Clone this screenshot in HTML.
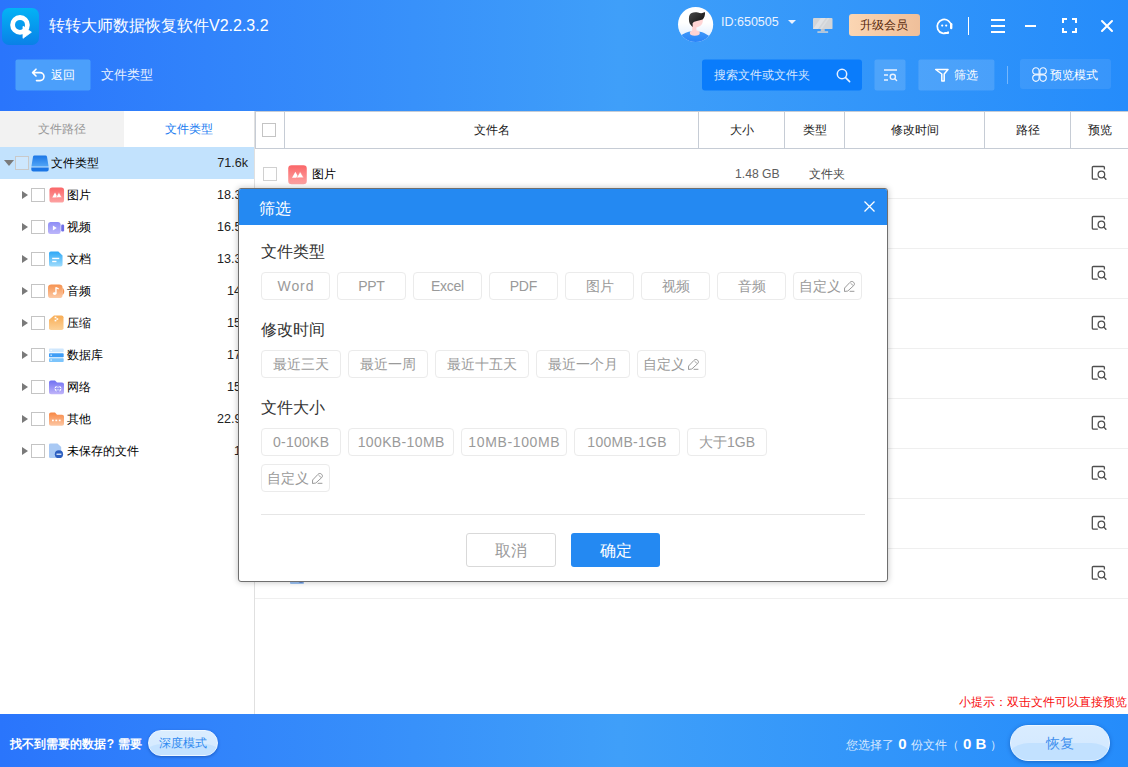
<!DOCTYPE html>
<html lang="zh">
<head>
<meta charset="utf-8">
<title>筛选</title>
<style>
*{box-sizing:border-box;margin:0;padding:0}
html,body{width:1128px;height:767px;overflow:hidden;background:#fff}
body{position:relative;font-family:"Liberation Sans",sans-serif;font-size:12px;color:#000}
.abs{position:absolute}
.t{position:absolute;white-space:nowrap;line-height:1}
svg{position:absolute;overflow:visible}
/* header */
#hdr{position:absolute;left:0;top:0;width:1128px;height:111px;background:linear-gradient(90deg,#2a75fc 0%,#3f9ff9 55%,#258cfb 100%)}
#logo{position:absolute;left:2px;top:8px;width:37px;height:37px;border-radius:7px;background:linear-gradient(180deg,#03b3f5 0%,#0a80e7 100%)}
.hbtn{position:absolute;top:59px;height:31px;border-radius:2px;background:rgba(255,255,255,.14);transform:translateY(.5px)}
/* left */
#left{position:absolute;left:0;top:111px;width:255px;height:603px;background:#fff;border-right:1px solid #e0e0e0}
.tab{position:absolute;top:0;height:36px;line-height:36px;text-align:center;font-size:12px}
.row{position:absolute;left:0;width:254px;height:32px}
.cb{position:absolute;width:14px;height:14px;border:1px solid #c4c4c4;background:#fff}
.tri{position:absolute;width:0;height:0;border-top:4px solid transparent;border-bottom:4px solid transparent;border-left:6px solid #7a7a7a}
.rt{position:absolute;left:67px;top:0;line-height:32px;font-size:12px;color:#000;white-space:nowrap}
.rc{position:absolute;right:6px;top:0;line-height:32px;font-size:12.6px;color:#222;white-space:nowrap}
/* table */
#th{position:absolute;left:255px;top:111px;width:873px;height:38px;background:#fff;border-top:1px solid #c6ccd5;border-bottom:1px solid #c6ccd5}
.col{position:absolute;top:0;height:36px;border-left:1px solid #c6ccd5;line-height:36px;text-align:center;font-size:12px;color:#1a1a1a}
.tr{position:absolute;left:255px;width:873px;height:51px;border-bottom:1px solid #efefef}
/* bottom */
#btm{position:absolute;left:0;top:714px;width:1128px;height:53px;background:linear-gradient(90deg,#2a75fc 0%,#3f9ff9 55%,#258cfb 100%)}
/* dialog */
#dlg{position:absolute;left:238px;top:188px;width:650px;height:394px;background:#fff;border:1px solid #6f6f6f;border-radius:3px;box-shadow:0 0 6px rgba(0,0,0,.25)}
#dlgt{position:absolute;left:0;top:0;width:648px;height:36px;background:#2489f2;border-radius:2px 2px 0 0}
.sec{position:absolute;left:22px;font-size:16px;color:#333;line-height:1;white-space:nowrap}
.chip{position:absolute;height:28px;border:1px solid #ebebeb;border-radius:4px;background:#fff;color:#9a9a9a;font-size:14px;line-height:27px;text-align:center;white-space:nowrap}
</style>
</head>
<body>
<div id="hdr">
  <div id="logo">
    <svg style="left:0;top:0" width="37" height="37" viewBox="0 0 37 37"><circle cx="18" cy="16.9" r="7.4" fill="none" stroke="#fff" stroke-width="4.8"/><path d="M21 18.3 L29.4 24.2 L21 30.3 Z" fill="#fff" stroke="#fff" stroke-width="0.8" stroke-linejoin="round"/></svg>
  </div>
  <div class="t" style="left:49px;top:18px;font-size:16px;color:#fff">转转大师数据恢复软件V2.2.3.2</div>
  <!-- back -->
  <div class="hbtn" style="left:16px;top:59px;height:31px;width:75px;background:#4b9ffb;transform:translate(-0.5px,0.5px)"></div>
  <svg style="left:31.4px;top:68px" width="15" height="14" viewBox="0 0 15 14"><path d="M5 1.2 L1.6 4.6 L5 8 M2 4.6 H9 A4 4 0 0 1 9 12.6 H5.5" fill="none" stroke="#fff" stroke-width="1.6" stroke-linecap="round" stroke-linejoin="round"/></svg>
  <div class="t" style="left:51px;top:69px;font-size:12px;color:#fff">返回</div>
  <div class="t" style="left:101px;top:68px;font-size:13px;color:#e9f1ff">文件类型</div>
  <!-- avatar -->
  <svg style="left:678px;top:6px" width="36" height="37" viewBox="0 0 36 37">
    <defs><clipPath id="avc"><circle cx="17.6" cy="18.5" r="17.6"/></clipPath><linearGradient id="avg" x1="0" y1="0" x2="0" y2="1"><stop offset="0.45" stop-color="#ffffff"/><stop offset="0.8" stop-color="#e6f1ff"/></linearGradient><linearGradient id="avb" x1="0" y1="0" x2="0" y2="1"><stop offset="0" stop-color="#3d97f9"/><stop offset="1" stop-color="#2680f8"/></linearGradient><linearGradient id="avh" x1="0" y1="0" x2="1" y2="1"><stop offset="0" stop-color="#4a4a4a"/><stop offset="0.7" stop-color="#1c1c1c"/></linearGradient></defs>
    <circle cx="17.6" cy="18.5" r="17.6" fill="url(#avg)"/>
    <g clip-path="url(#avc)">
      <path d="M-1 33 C4 28 8 26.2 12.1 25.5 L21.8 25.7 C26 26.4 30 28.6 36 34 V38 H-1 Z" fill="url(#avb)"/>
      <path d="M14.2 19 H18.4 V25.5 H14.2 Z" fill="#ffd3d3"/>
      <ellipse cx="16.8" cy="27" rx="5" ry="2.7" fill="#ffd3d3"/>
      <path d="M14.4 15 L24.9 13.6 C24.9 16 24.4 17.6 23.6 18.6 C22.6 20 21 21 18 21.5 L14.4 21 Z" fill="#ffd5d5"/>
      <path d="M10.9 13 C10.8 9.5 12 7.6 13.6 6.9 C15.4 6.1 18 6 20 6.6 C22.4 7.4 24.6 7.6 26.8 6.1 C27.2 7.8 27 9.2 26.5 10.4 C26 11.8 25.3 12.8 24.6 13.5 C22.4 14.1 19.4 14.6 17.1 15.6 C16 16 15 16.6 14.6 17.3 L14.7 21 C13.6 20 12.3 18.6 11.6 17.2 C11.1 16 10.9 14.6 10.9 13 Z" fill="url(#avh)"/>
    </g>
  </svg>
  <div class="t" style="left:721px;top:16px;font-size:12.5px;color:#eaf2ff">ID:650505</div>
  <div class="abs" style="left:788px;top:20px;width:0;height:0;border-left:4px solid transparent;border-right:4px solid transparent;border-top:4px solid #eaf2ff"></div>
  <!-- monitor -->
  <svg style="left:813px;top:18px" width="19.5" height="15" preserveAspectRatio="none" viewBox="0 0 20 16"><rect x="0" y="0" width="20" height="11.8" rx="1" fill="#d3d5d8"/><path d="M8 0 L13 0 L5 11.8 L0 11.8 Z" fill="#e0e2e5"/><path d="M15 0 L17 0 L9 11.8 L7 11.8 Z" fill="#dcdee1"/><rect x="8" y="11.8" width="4" height="2.4" fill="#c3c6cb"/><rect x="4.5" y="14.2" width="11" height="1.6" fill="#d0d2d6"/></svg>
  <!-- vip -->
  <div class="abs" style="left:849px;top:14px;width:71px;height:22px;border-radius:3px;background:linear-gradient(90deg,#fbd6b3,#efbf9a);color:#55260a;font-size:12px;line-height:22px;text-align:center;text-indent:-2px">升级会员</div>
  <!-- service -->
  <svg style="left:935px;top:17px" width="19" height="18" viewBox="0 0 19 18"><path d="M13.2 15.2 A7 7 0 1 1 16.2 9.2" fill="none" stroke="#fff" stroke-width="1.7" stroke-linecap="round"/><path d="M16.2 7.2 V11" stroke="#fff" stroke-width="2.4" stroke-linecap="round"/><circle cx="7.2" cy="8.6" r="1.1" fill="#fff"/><circle cx="11.2" cy="8.6" r="1.1" fill="#fff"/><path d="M10 16 H13" stroke="#fff" stroke-width="2" stroke-linecap="round"/></svg>
  <div class="abs" style="left:968px;top:17px;width:1px;height:18px;background:#fff"></div>
  <!-- menu -->
  <div class="abs" style="left:991px;top:19px;width:14px;height:2px;background:#fff"></div>
  <div class="abs" style="left:991px;top:25px;width:14px;height:2px;background:#fff"></div>
  <div class="abs" style="left:991px;top:31px;width:14px;height:2px;background:#fff"></div>
  <div class="abs" style="left:1025px;top:25px;width:11px;height:2px;background:#fff"></div>
  <svg style="left:1062px;top:18px" width="15" height="15" viewBox="0 0 15 15"><path d="M1 5 V1 H5 M10 1 H14 V5 M14 10 V14 H10 M5 14 H1 V10" fill="none" stroke="#fff" stroke-width="2"/></svg>
  <svg style="left:1101px;top:20px" width="12" height="12" viewBox="0 0 12 12"><path d="M1 1 L11 11 M11 1 L1 11" stroke="#fff" stroke-width="2" stroke-linecap="round"/></svg>
  <!-- search -->
  <div class="abs" style="left:702px;top:59px;width:160px;height:31px;border-radius:3px;background:#0a7cfb;transform:translateY(.5px)"></div>
  <div class="t" style="left:714px;top:69px;font-size:12px;color:#d5e6ff">搜索文件或文件夹</div>
  <svg style="left:836px;top:68px" width="15" height="15" viewBox="0 0 15 15"><circle cx="6" cy="6" r="4.7" fill="none" stroke="#e6f0ff" stroke-width="1.5"/><path d="M9.6 9.6 L13.6 13.6" stroke="#e6f0ff" stroke-width="1.6" stroke-linecap="round"/></svg>
  <div class="hbtn" style="left:875px;width:31px;transform:translate(-.5px,.5px)"></div>
  <svg style="left:883px;top:68px" width="16" height="14" viewBox="0 0 16 14"><path d="M1 2 H14 M1 7 H5 M1 12 H5" stroke="#eaf2ff" stroke-width="1.5"/><circle cx="9.8" cy="8.8" r="2.6" fill="none" stroke="#eaf2ff" stroke-width="1.4"/><path d="M11.8 10.8 L13.6 12.6" stroke="#eaf2ff" stroke-width="1.4" stroke-linecap="round"/></svg>
  <div class="hbtn" style="left:918px;width:76px;transform:translate(.4px,.5px)"></div>
  <svg style="left:934px;top:68px" width="16" height="15" viewBox="0 0 16 15"><path d="M1.7 1.5 H14 L10.2 6 V13 H7.8 V6 Z" fill="none" stroke="#fff" stroke-width="1.5" stroke-linejoin="round"/></svg>
  <div class="t" style="left:954px;top:69px;font-size:12px;color:#fff">筛选</div>
  <div class="abs" style="left:1007px;top:66px;width:1px;height:18px;background:rgba(255,255,255,.35)"></div>
  <div class="hbtn" style="left:1020px;width:91px;top:59px;height:30px;transform:none;border-radius:3px;background:rgba(255,255,255,.085)"></div>
  <svg style="left:1032px;top:67px" width="15" height="15" viewBox="0 0 15 15"><g fill="none" stroke="#f2f7ff" stroke-width="1.15"><path d="M3.9 0.7 A3.2 3.2 0 0 0 0.7 3.9 A3.2 3.2 0 0 0 3.9 7.1 H7.1 V3.9 A3.2 3.2 0 0 0 3.9 0.7 Z"/><path d="M3.9 0.7 A3.2 3.2 0 0 0 0.7 3.9 A3.2 3.2 0 0 0 3.9 7.1 H7.1 V3.9 A3.2 3.2 0 0 0 3.9 0.7 Z" transform="translate(15,0) scale(-1,1)"/><path d="M3.9 0.7 A3.2 3.2 0 0 0 0.7 3.9 A3.2 3.2 0 0 0 3.9 7.1 H7.1 V3.9 A3.2 3.2 0 0 0 3.9 0.7 Z" transform="translate(0,15) scale(1,-1)"/><path d="M3.9 0.7 A3.2 3.2 0 0 0 0.7 3.9 A3.2 3.2 0 0 0 3.9 7.1 H7.1 V3.9 A3.2 3.2 0 0 0 3.9 0.7 Z" transform="translate(15,15) scale(-1,-1)"/></g></svg>
  <div class="t" style="left:1050px;top:69px;font-size:12px;color:#fff">预览模式</div>
</div>
<div id="left">
  <div class="tab" style="left:0;width:124px;background:#f2f2f2;color:#999">文件路径</div>
  <div class="tab" style="left:124px;width:130px;background:#fff;color:#1c7df0">文件类型</div>
  <div class="row" style="top:36px;background:#c2e2fd">
    <div class="abs" style="left:4px;top:13px;width:0;height:0;border-left:5px solid transparent;border-right:5px solid transparent;border-top:6px solid #7a7a7a"></div>
    <div class="cb" style="left:15px;top:9px;background:#cde7fe;border-color:#c9c9c9"></div>
    <svg style="left:31px;top:8px" width="18" height="17" viewBox="0 0 18 17"><defs><linearGradient id="gdr" x1="0" y1="0" x2="0" y2="1"><stop offset="0" stop-color="#1b76e6"/><stop offset="1" stop-color="#52a6f7"/></linearGradient></defs><path d="M3.6 0.5 H14.4 A1.6 1.6 0 0 1 16 1.8 L17.6 11.5 H0.4 L2 1.8 A1.6 1.6 0 0 1 3.6 0.5 Z" fill="url(#gdr)"/><path d="M0.3 12.6 H17.7 V14.4 A2 2 0 0 1 15.7 16.4 H2.3 A2 2 0 0 1 0.3 14.4 Z" fill="#1b76e6"/></svg>
    <div class="rt" style="left:51px">文件类型</div>
    <div class="rc">71.6k</div>
  </div>
  <div class="row" style="top:68px"><div class="tri" style="left:21.5px;top:12px"></div><div class="cb" style="left:31px;top:9px"></div><svg style="left:48.5px;top:8px" width="15.5" height="16" preserveAspectRatio="none" viewBox="0 0 17 18"><defs><linearGradient id="gi" x1="0" y1="0" x2="0" y2="1"><stop offset="0" stop-color="#fa6668"/><stop offset="1" stop-color="#fda3a3"/></linearGradient></defs><rect x="0.5" y="0.5" width="16" height="17" rx="3" fill="url(#gi)"/><path d="M3.6 11.8 L6.6 6.2 L9.6 11.8 Z" fill="#fff"/><path d="M7.7 11.8 L10.9 6.2 L14.1 11.8 Z" fill="#fff" stroke="#fb8485" stroke-width="0.5"/></svg><div class="rt">图片</div><div class="rc" style="right:auto;left:216.9px">18.3k</div></div>
  <div class="row" style="top:100px"><div class="tri" style="left:21.5px;top:12px"></div><div class="cb" style="left:31px;top:9px"></div><svg style="left:48px;top:8.5px" width="16.5" height="16" preserveAspectRatio="none" viewBox="0 0 17 16"><defs><linearGradient id="gv" x1="0" y1="0" x2="0" y2="1"><stop offset="0" stop-color="#8d8df6"/><stop offset="1" stop-color="#bdb6fa"/></linearGradient></defs><rect x="0" y="2" width="13" height="12" rx="2.5" fill="url(#gv)"/><rect x="13.6" y="4.6" width="3" height="6.8" rx="1.2" fill="#6f6fe6"/><path d="M5 5.4 L9 8 L5 10.6 Z" fill="#fff"/></svg><div class="rt">视频</div><div class="rc" style="right:auto;left:216.9px">16.5k</div></div>
  <div class="row" style="top:132px"><div class="tri" style="left:21.5px;top:12px"></div><div class="cb" style="left:31px;top:9px"></div><svg style="left:49px;top:8px" width="14" height="16" preserveAspectRatio="none" viewBox="0 0 15 18"><defs><linearGradient id="gd" x1="0" y1="0" x2="0" y2="1"><stop offset="0" stop-color="#2fa8f6"/><stop offset="1" stop-color="#9fdcfc"/></linearGradient></defs><path d="M2 0.5 H10 L14.5 5 V15.5 A2 2 0 0 1 12.5 17.5 H2 A2 2 0 0 1 0 15.5 V2.5 A2 2 0 0 1 2 0.5 Z" fill="url(#gd)"/><rect x="3.4" y="7.6" width="7.6" height="1.6" fill="#fff"/><rect x="3.4" y="11" width="4.6" height="1.6" fill="#fff"/></svg><div class="rt">文档</div><div class="rc" style="right:auto;left:216.9px">13.3k</div></div>
  <div class="row" style="top:164px"><div class="tri" style="left:21.5px;top:12px"></div><div class="cb" style="left:31px;top:9px"></div><svg style="left:48px;top:8.5px" width="16.5" height="14.5" preserveAspectRatio="none" viewBox="0 0 17 16"><defs><linearGradient id="ga" x1="0" y1="0" x2="0" y2="1"><stop offset="0" stop-color="#f6924f"/><stop offset="1" stop-color="#fccaa6"/></linearGradient></defs><rect x="0" y="0.5" width="15" height="15" rx="3.5" fill="url(#ga)"/><path d="M15 4 C17.3 6 17.3 10 15 12 Z" fill="#f6924f"/><path d="M8.2 3.6 V10.2 M8.2 3.8 L11 5.6" stroke="#fff" stroke-width="1.4" fill="none"/><ellipse cx="6.9" cy="10.6" rx="1.9" ry="1.5" fill="#fff"/></svg><div class="rt">音频</div><div class="rc" style="right:auto;left:226.9px">14</div></div>
  <div class="row" style="top:196px"><div class="tri" style="left:21.5px;top:12px"></div><div class="cb" style="left:31px;top:9px"></div><svg style="left:48.5px;top:8px" width="15" height="15.5" preserveAspectRatio="none" viewBox="0 0 15 18"><defs><linearGradient id="gz" x1="0" y1="0" x2="0" y2="1"><stop offset="0" stop-color="#f8ad55"/><stop offset="1" stop-color="#fcd299"/></linearGradient></defs><path d="M5 0.5 H12.5 A2 2 0 0 1 14.5 2.5 V15.5 A2 2 0 0 1 12.5 17.5 H2 A2 2 0 0 1 0 15.5 V5.5 Z" fill="url(#gz)"/><rect x="5.6" y="2" width="1.8" height="1.8" fill="#fff"/><rect x="7.4" y="3.8" width="1.8" height="1.8" fill="#fff"/><rect x="5.6" y="5.6" width="1.8" height="1.8" fill="#fff"/></svg><div class="rt">压缩</div><div class="rc" style="right:auto;left:226.9px">15</div></div>
  <div class="row" style="top:228px"><div class="tri" style="left:21.5px;top:12px"></div><div class="cb" style="left:31px;top:9px"></div><svg style="left:49px;top:9px" width="14.7" height="14.5" preserveAspectRatio="none" viewBox="0 0 15 16"><rect x="0" y="0.5" width="15" height="4.2" rx="0.8" fill="#cfe7fd"/><rect x="0" y="5.7" width="15" height="4.4" rx="0.8" fill="#3f9df6"/><rect x="0" y="11.2" width="15" height="4.2" rx="0.8" fill="#7cc4fb"/><rect x="1.5" y="2" width="1.4" height="1.2" fill="#fff"/><rect x="1.5" y="7.3" width="1.4" height="1.2" fill="#fff"/><rect x="1.5" y="12.7" width="1.4" height="1.2" fill="#fff"/></svg><div class="rt">数据库</div><div class="rc" style="right:auto;left:226.9px">17</div></div>
  <div class="row" style="top:260px"><div class="tri" style="left:21.5px;top:12px"></div><div class="cb" style="left:31px;top:9px"></div><svg style="left:49px;top:9.4px" width="15" height="14.6" preserveAspectRatio="none" viewBox="0 0 15 17"><defs><linearGradient id="gn" x1="0" y1="0" x2="0" y2="1"><stop offset="0" stop-color="#6f70f2"/><stop offset="1" stop-color="#c0b4f9"/></linearGradient></defs><path d="M2 0.5 H6 L8 3 H13 A2 2 0 0 1 15 5 V14.5 A2 2 0 0 1 13 16.5 H2 A2 2 0 0 1 0 14.5 V2.5 A2 2 0 0 1 2 0.5 Z" fill="url(#gn)"/><circle cx="9" cy="10" r="3.4" fill="#fff"/><path d="M9 6.6 V13.4 M5.6 10 H12.4" stroke="#8a86f3" stroke-width="0.9"/><ellipse cx="9" cy="10" rx="1.5" ry="3.4" fill="none" stroke="#8a86f3" stroke-width="0.8"/></svg><div class="rt">网络</div><div class="rc" style="right:auto;left:226.9px">15</div></div>
  <div class="row" style="top:292px"><div class="tri" style="left:21.5px;top:12px"></div><div class="cb" style="left:31px;top:9px"></div><svg style="left:49px;top:9.3px" width="15" height="14.2" preserveAspectRatio="none" viewBox="0 0 15 16"><defs><linearGradient id="go" x1="0" y1="0" x2="0" y2="1"><stop offset="0" stop-color="#f88744"/><stop offset="1" stop-color="#fcc7a4"/></linearGradient></defs><path d="M2 0.5 H6 L8 3 H13 A2 2 0 0 1 15 5 V13.5 A2 2 0 0 1 13 15.5 H2 A2 2 0 0 1 0 13.5 V2.5 A2 2 0 0 1 2 0.5 Z" fill="url(#go)"/><rect x="3" y="8.6" width="1.8" height="1.8" fill="#fff"/><rect x="6.4" y="8.6" width="1.8" height="1.8" fill="#fff"/><rect x="9.8" y="8.6" width="1.8" height="1.8" fill="#fff"/></svg><div class="rt">其他</div><div class="rc" style="right:auto;left:216.9px">22.9k</div></div>
  <div class="row" style="top:324px"><div class="tri" style="left:21.5px;top:12px"></div><div class="cb" style="left:31px;top:9px"></div><svg style="left:49px;top:8.3px" width="15" height="16" preserveAspectRatio="none" viewBox="0 0 16 18"><path d="M1.5 0.5 H9 L13 4.5 V15.5 A1.5 1.5 0 0 1 11.5 17 H1.5 A1.5 1.5 0 0 1 0 15.5 V2 A1.5 1.5 0 0 1 1.5 0.5 Z" fill="#a9c9f4"/><circle cx="10.6" cy="12.6" r="4.4" fill="#2d5fc0"/><rect x="8" y="11.9" width="5.2" height="1.5" fill="#dbe8fb"/></svg><div class="rt">未保存的文件</div><div class="rc" style="right:auto;left:233.9px">1</div></div>
</div>
<div id="th">
  <div class="col" style="left:0;width:29px"><div class="cb" style="left:6px;top:11px"></div></div>
  <div class="col" style="left:29px;width:414px">文件名</div>
  <div class="col" style="left:443px;width:86px">大小</div>
  <div class="col" style="left:529px;width:60px">类型</div>
  <div class="col" style="left:589px;width:140px">修改时间</div>
  <div class="col" style="left:729px;width:86px">路径</div>
  <div class="col" style="left:815px;width:58px">预览</div>
</div>
<div id="rows">
  <div class="tr" style="top:148px"><svg style="left:836px;top:17px" width="17" height="17" viewBox="0 0 17 17"><path d="M13.4 4.6 V2.6 A1.1 1.1 0 0 0 12.3 1.5 H2.4 A1.1 1.1 0 0 0 1.3 2.6 V13 A1.1 1.1 0 0 0 2.4 14.1 H6.8" fill="none" stroke="#4f4f4f" stroke-width="1.3"/><circle cx="10.4" cy="9.5" r="3.3" fill="none" stroke="#4f4f4f" stroke-width="1.3"/><path d="M12.9 12.1 L14.9 14.3" stroke="#4f4f4f" stroke-width="1.4" stroke-linecap="round"/></svg><div class="cb" style="left:8px;top:19px;border-color:#d0d0d0"></div><svg style="left:33px;top:16.5px" width="19" height="19.5" preserveAspectRatio="none" viewBox="0 0 17 18"><rect x="0.2" y="0.2" width="16.6" height="17.6" rx="3" fill="url(#gi)"/><path d="M3.6 11.8 L6.6 6.2 L9.6 11.8 Z" fill="#fff"/><path d="M7.7 11.8 L10.9 6.2 L14.1 11.8 Z" fill="#fff" stroke="#fb8485" stroke-width="0.5"/></svg><div class="t" style="left:57px;top:20px;font-size:12px;color:#000">图片</div><div class="t" style="left:480px;top:20px;font-size:12.2px;color:#5e5e5e">1.48 GB</div><div class="t" style="left:554px;top:20px;font-size:12px;color:#4a4a4a">文件夹</div></div>
  <div class="tr" style="top:198px"><svg style="left:836px;top:17px" width="17" height="17" viewBox="0 0 17 17"><path d="M13.4 4.6 V2.6 A1.1 1.1 0 0 0 12.3 1.5 H2.4 A1.1 1.1 0 0 0 1.3 2.6 V13 A1.1 1.1 0 0 0 2.4 14.1 H6.8" fill="none" stroke="#4f4f4f" stroke-width="1.3"/><circle cx="10.4" cy="9.5" r="3.3" fill="none" stroke="#4f4f4f" stroke-width="1.3"/><path d="M12.9 12.1 L14.9 14.3" stroke="#4f4f4f" stroke-width="1.4" stroke-linecap="round"/></svg></div>
  <div class="tr" style="top:248px"><svg style="left:836px;top:17px" width="17" height="17" viewBox="0 0 17 17"><path d="M13.4 4.6 V2.6 A1.1 1.1 0 0 0 12.3 1.5 H2.4 A1.1 1.1 0 0 0 1.3 2.6 V13 A1.1 1.1 0 0 0 2.4 14.1 H6.8" fill="none" stroke="#4f4f4f" stroke-width="1.3"/><circle cx="10.4" cy="9.5" r="3.3" fill="none" stroke="#4f4f4f" stroke-width="1.3"/><path d="M12.9 12.1 L14.9 14.3" stroke="#4f4f4f" stroke-width="1.4" stroke-linecap="round"/></svg></div>
  <div class="tr" style="top:298px"><svg style="left:836px;top:17px" width="17" height="17" viewBox="0 0 17 17"><path d="M13.4 4.6 V2.6 A1.1 1.1 0 0 0 12.3 1.5 H2.4 A1.1 1.1 0 0 0 1.3 2.6 V13 A1.1 1.1 0 0 0 2.4 14.1 H6.8" fill="none" stroke="#4f4f4f" stroke-width="1.3"/><circle cx="10.4" cy="9.5" r="3.3" fill="none" stroke="#4f4f4f" stroke-width="1.3"/><path d="M12.9 12.1 L14.9 14.3" stroke="#4f4f4f" stroke-width="1.4" stroke-linecap="round"/></svg></div>
  <div class="tr" style="top:348px"><svg style="left:836px;top:17px" width="17" height="17" viewBox="0 0 17 17"><path d="M13.4 4.6 V2.6 A1.1 1.1 0 0 0 12.3 1.5 H2.4 A1.1 1.1 0 0 0 1.3 2.6 V13 A1.1 1.1 0 0 0 2.4 14.1 H6.8" fill="none" stroke="#4f4f4f" stroke-width="1.3"/><circle cx="10.4" cy="9.5" r="3.3" fill="none" stroke="#4f4f4f" stroke-width="1.3"/><path d="M12.9 12.1 L14.9 14.3" stroke="#4f4f4f" stroke-width="1.4" stroke-linecap="round"/></svg></div>
  <div class="tr" style="top:398px"><svg style="left:836px;top:17px" width="17" height="17" viewBox="0 0 17 17"><path d="M13.4 4.6 V2.6 A1.1 1.1 0 0 0 12.3 1.5 H2.4 A1.1 1.1 0 0 0 1.3 2.6 V13 A1.1 1.1 0 0 0 2.4 14.1 H6.8" fill="none" stroke="#4f4f4f" stroke-width="1.3"/><circle cx="10.4" cy="9.5" r="3.3" fill="none" stroke="#4f4f4f" stroke-width="1.3"/><path d="M12.9 12.1 L14.9 14.3" stroke="#4f4f4f" stroke-width="1.4" stroke-linecap="round"/></svg></div>
  <div class="tr" style="top:448px"><svg style="left:836px;top:17px" width="17" height="17" viewBox="0 0 17 17"><path d="M13.4 4.6 V2.6 A1.1 1.1 0 0 0 12.3 1.5 H2.4 A1.1 1.1 0 0 0 1.3 2.6 V13 A1.1 1.1 0 0 0 2.4 14.1 H6.8" fill="none" stroke="#4f4f4f" stroke-width="1.3"/><circle cx="10.4" cy="9.5" r="3.3" fill="none" stroke="#4f4f4f" stroke-width="1.3"/><path d="M12.9 12.1 L14.9 14.3" stroke="#4f4f4f" stroke-width="1.4" stroke-linecap="round"/></svg></div>
  <div class="tr" style="top:498px"><svg style="left:836px;top:17px" width="17" height="17" viewBox="0 0 17 17"><path d="M13.4 4.6 V2.6 A1.1 1.1 0 0 0 12.3 1.5 H2.4 A1.1 1.1 0 0 0 1.3 2.6 V13 A1.1 1.1 0 0 0 2.4 14.1 H6.8" fill="none" stroke="#4f4f4f" stroke-width="1.3"/><circle cx="10.4" cy="9.5" r="3.3" fill="none" stroke="#4f4f4f" stroke-width="1.3"/><path d="M12.9 12.1 L14.9 14.3" stroke="#4f4f4f" stroke-width="1.4" stroke-linecap="round"/></svg></div>
  <div class="tr" style="top:548px"><svg style="left:836px;top:17px" width="17" height="17" viewBox="0 0 17 17"><path d="M13.4 4.6 V2.6 A1.1 1.1 0 0 0 12.3 1.5 H2.4 A1.1 1.1 0 0 0 1.3 2.6 V13 A1.1 1.1 0 0 0 2.4 14.1 H6.8" fill="none" stroke="#4f4f4f" stroke-width="1.3"/><circle cx="10.4" cy="9.5" r="3.3" fill="none" stroke="#4f4f4f" stroke-width="1.3"/><path d="M12.9 12.1 L14.9 14.3" stroke="#4f4f4f" stroke-width="1.4" stroke-linecap="round"/></svg><div class="abs" style="left:35px;top:18px;width:14px;height:18px;background:#9cc3f5;border-radius:1px"></div><div class="abs" style="left:43px;top:30px;width:6px;height:5px;background:#5f86cf;border-radius:0 0 3px 3px"></div></div>
</div>
<div class="t" style="left:959px;top:696px;font-size:12px;color:#f80d0d">小提示：双击文件可以直接预览</div>
<div id="btm">
  <div class="t" style="left:10px;top:24px;font-size:12px;font-weight:bold;color:#fff">找不到需要的数据<span style="margin:0 .3px 0 .7px">?</span> 需要</div>
  <div class="abs" style="left:148px;top:16px;width:70px;height:26px;border-radius:13px;overflow:hidden;border:1.5px solid #eef7ff;background:linear-gradient(180deg,#daedff,#d3e9ff);box-shadow:0 1px 3px rgba(0,40,120,.4);color:#2f8af0;font-size:12px;line-height:25.6px;text-align:center"><div class="abs" style="left:-8.5px;top:12.5px;width:84px;height:40px;border-radius:20px;background:#c4e2ff"></div><span style="position:relative">深度模式</span></div>
  <div class="t" style="left:846px;top:22px;font-size:12px;color:#d9e9ff;line-height:16px">您选择了 <b style="font-size:15px;color:#fff;margin:0 1.1px 0 .8px">0</b> 份文件（ <b style="font-size:15px;color:#fff;margin-left:.7px">0 B</b> ）</div>
  <div class="abs" style="left:1010px;top:11px;width:100px;height:36px;border-radius:18px;overflow:hidden;border:1.5px solid #eef7ff;background:linear-gradient(180deg,#d9ecff 0%,#d2e8ff 100%);box-shadow:0 1px 4px rgba(0,40,120,.4);color:#3f90ee;font-size:14px;line-height:35.5px;text-align:center"><div class="abs" style="left:-9.5px;top:16.5px;width:116px;height:60px;border-radius:27px;background:#c2e1ff"></div><span style="position:relative">恢复</span></div>
</div>
<div id="dlg"><div id="dlgt"></div>
<div class="t" style="left:20px;top:12px;font-size:16px;color:#fff">筛选</div>
<svg style="left:625px;top:12px" width="11" height="11" viewBox="0 0 11 11"><path d="M0.5 0.5 L10.5 10.5 M10.5 0.5 L0.5 10.5" stroke="#fff" stroke-width="1.3"/></svg>
<div class="sec" style="left:22px;top:55px">文件类型</div>
<div class="chip" style="left:22px;top:83px;width:69px;letter-spacing:0.90px;text-indent:0.90px">Word</div>
<div class="chip" style="left:98px;top:83px;width:69px;letter-spacing:-0.40px;text-indent:-0.40px">PPT</div>
<div class="chip" style="left:174px;top:83px;width:69px;letter-spacing:-0.25px;text-indent:-0.25px">Excel</div>
<div class="chip" style="left:250px;top:83px;width:69px;letter-spacing:-0.25px;text-indent:-0.25px">PDF</div>
<div class="chip" style="left:326px;top:83px;width:69px">图片</div>
<div class="chip" style="left:402px;top:83px;width:69px">视频</div>
<div class="chip" style="left:478px;top:83px;width:69px">音频</div>
<div class="chip" style="left:554px;top:83px;width:69px;text-indent:-1px">自定义<svg style="position:relative;left:0;top:0.6px;display:inline-block;margin-left:2.3px" width="11" height="11" viewBox="0 0 11 11"><path d="M0.5 10.5 L0.6 7 L6 1.3 C7 0.2 8.7 0.2 9.7 1.3 C10.7 2.4 10.6 3.6 9.8 4.5 L3.8 10 Z M6.9 2.3 L9 4.6 M5.6 10.3 H10.4" fill="none" stroke="#8e8e8e" stroke-width="0.9" stroke-linejoin="round"/></svg></div>
<div class="sec" style="left:22px;top:133px">修改时间</div>
<div class="chip" style="left:22px;top:161px;width:80px">最近三天</div>
<div class="chip" style="left:109px;top:161px;width:80px">最近一周</div>
<div class="chip" style="left:196px;top:161px;width:94px">最近十五天</div>
<div class="chip" style="left:297px;top:161px;width:94px">最近一个月</div>
<div class="chip" style="left:398px;top:161px;width:69px;text-indent:-1px">自定义<svg style="position:relative;left:0;top:0.6px;display:inline-block;margin-left:2.3px" width="11" height="11" viewBox="0 0 11 11"><path d="M0.5 10.5 L0.6 7 L6 1.3 C7 0.2 8.7 0.2 9.7 1.3 C10.7 2.4 10.6 3.6 9.8 4.5 L3.8 10 Z M6.9 2.3 L9 4.6 M5.6 10.3 H10.4" fill="none" stroke="#8e8e8e" stroke-width="0.9" stroke-linejoin="round"/></svg></div>
<div class="sec" style="left:22px;top:211px">文件大小</div>
<div class="chip" style="left:22px;top:239px;width:80px;letter-spacing:0.25px;text-indent:0.25px">0-100KB</div>
<div class="chip" style="left:109px;top:239px;width:106px;letter-spacing:0.38px;text-indent:0.38px">100KB-10MB</div>
<div class="chip" style="left:222px;top:239px;width:106px;letter-spacing:0.65px;text-indent:0.65px">10MB-100MB</div>
<div class="chip" style="left:335px;top:239px;width:106px;letter-spacing:0.28px;text-indent:0.28px">100MB-1GB</div>
<div class="chip" style="left:448px;top:239px;width:80px">大于1GB</div>
<div class="chip" style="left:22px;top:275px;width:69px;text-indent:-1px">自定义<svg style="position:relative;left:0;top:0.6px;display:inline-block;margin-left:2.3px" width="11" height="11" viewBox="0 0 11 11"><path d="M0.5 10.5 L0.6 7 L6 1.3 C7 0.2 8.7 0.2 9.7 1.3 C10.7 2.4 10.6 3.6 9.8 4.5 L3.8 10 Z M6.9 2.3 L9 4.6 M5.6 10.3 H10.4" fill="none" stroke="#8e8e8e" stroke-width="0.9" stroke-linejoin="round"/></svg></div>
<div class="abs" style="left:22px;top:325px;width:604px;height:1px;background:#e6e6e6"></div>
<div class="abs" style="left:227px;top:344px;width:90px;height:34px;border:1px solid #d9d9d9;border-radius:3px;color:#999;font-size:16px;line-height:33px;text-align:center">取消</div>
<div class="abs" style="left:332px;top:344px;width:89px;height:34px;border-radius:3px;background:#2489f2;color:#fff;font-size:16px;line-height:35px;text-align:center">确定</div>
</div>
</body>
</html>
